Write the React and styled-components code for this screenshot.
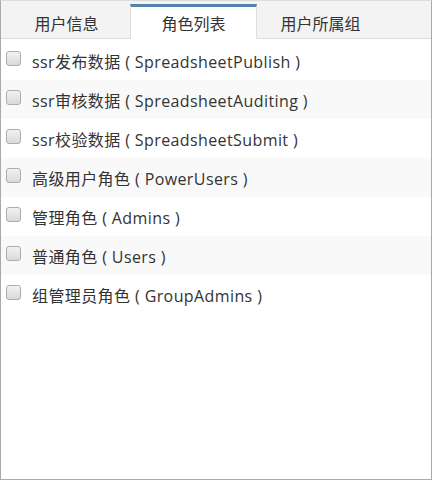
import styled, { createGlobalStyle } from "styled-components";

const GlobalStyle = createGlobalStyle`
  html, body {
    margin: 0;
    padding: 0;
    background: #fff;
  }
  body {
    font-family: "Open Sans", "Noto Sans CJK SC", sans-serif;
    color: #333;
  }
`;

const Frame = styled.div`
  width: 432px;
  height: 480px;
  box-sizing: border-box;
  border: 1px solid #a9a9a9;
  border-top-color: #dcdcdc;
  background: #fff;
  display: flex;
  flex-direction: column;
`;

const TabBar = styled.div`
  display: flex;
  background: #f3f3f3;
  border-bottom: 1px solid #dedede;
  padding: 3px 0 0 2px;
`;

const Tab = styled.div`
  width: 127px;
  height: 35px;
  box-sizing: border-box;
  margin-bottom: -1px;
  display: flex;
  align-items: center;
  justify-content: center;
  font-size: 16px;
  color: #333;
  cursor: pointer;
  border-top: 3px solid ${(p) => (p.$active ? "#5581ae" : "transparent")};
  border-left: 1px solid ${(p) => (p.$active ? "#dedede" : "transparent")};
  border-right: 1px solid ${(p) => (p.$active ? "#dedede" : "transparent")};
  background: ${(p) => (p.$active ? "#fff" : "transparent")};
`;

const RoleList = styled.ul`
  list-style: none;
  margin: 0;
  padding: 2px 0 0;
`;

const RoleRow = styled.li`
  height: 39px;
  display: flex;
  align-items: center;
  padding-left: 5px;
  font-size: 16px;
  letter-spacing: 0.4px;
  &:nth-child(even) {
    background: #f9f9f9;
  }
`;

const Check = styled.input.attrs({ type: "checkbox" })`
  appearance: none;
  width: 15px;
  height: 15px;
  margin: 0 11px 4px 0;
  box-sizing: border-box;
  border: 1px solid #acacac;
  border-radius: 3px;
  background: linear-gradient(#f2f2f2, #dadada);
  flex-shrink: 0;
`;

const tabs = ["用户信息", "角色列表", "用户所属组"];

const roles = [
  ["ssr发布数据", "SpreadsheetPublish"],
  ["ssr审核数据", "SpreadsheetAuditing"],
  ["ssr校验数据", "SpreadsheetSubmit"],
  ["高级用户角色", "PowerUsers"],
  ["管理角色", "Admins"],
  ["普通角色", "Users"],
  ["组管理员角色", "GroupAdmins"],
];

export default function App() {
  return (
    <>
      <GlobalStyle />
      <Frame>
        <TabBar>
          {tabs.map((t, i) => (
            <Tab key={t} $active={i === 1}>
              {t}
            </Tab>
          ))}
        </TabBar>
        <RoleList>
          {roles.map(([name, code]) => (
            <RoleRow key={code}>
              <Check />
              <span>
                {name} ( {code} )
              </span>
            </RoleRow>
          ))}
        </RoleList>
      </Frame>
    </>
  );
}
